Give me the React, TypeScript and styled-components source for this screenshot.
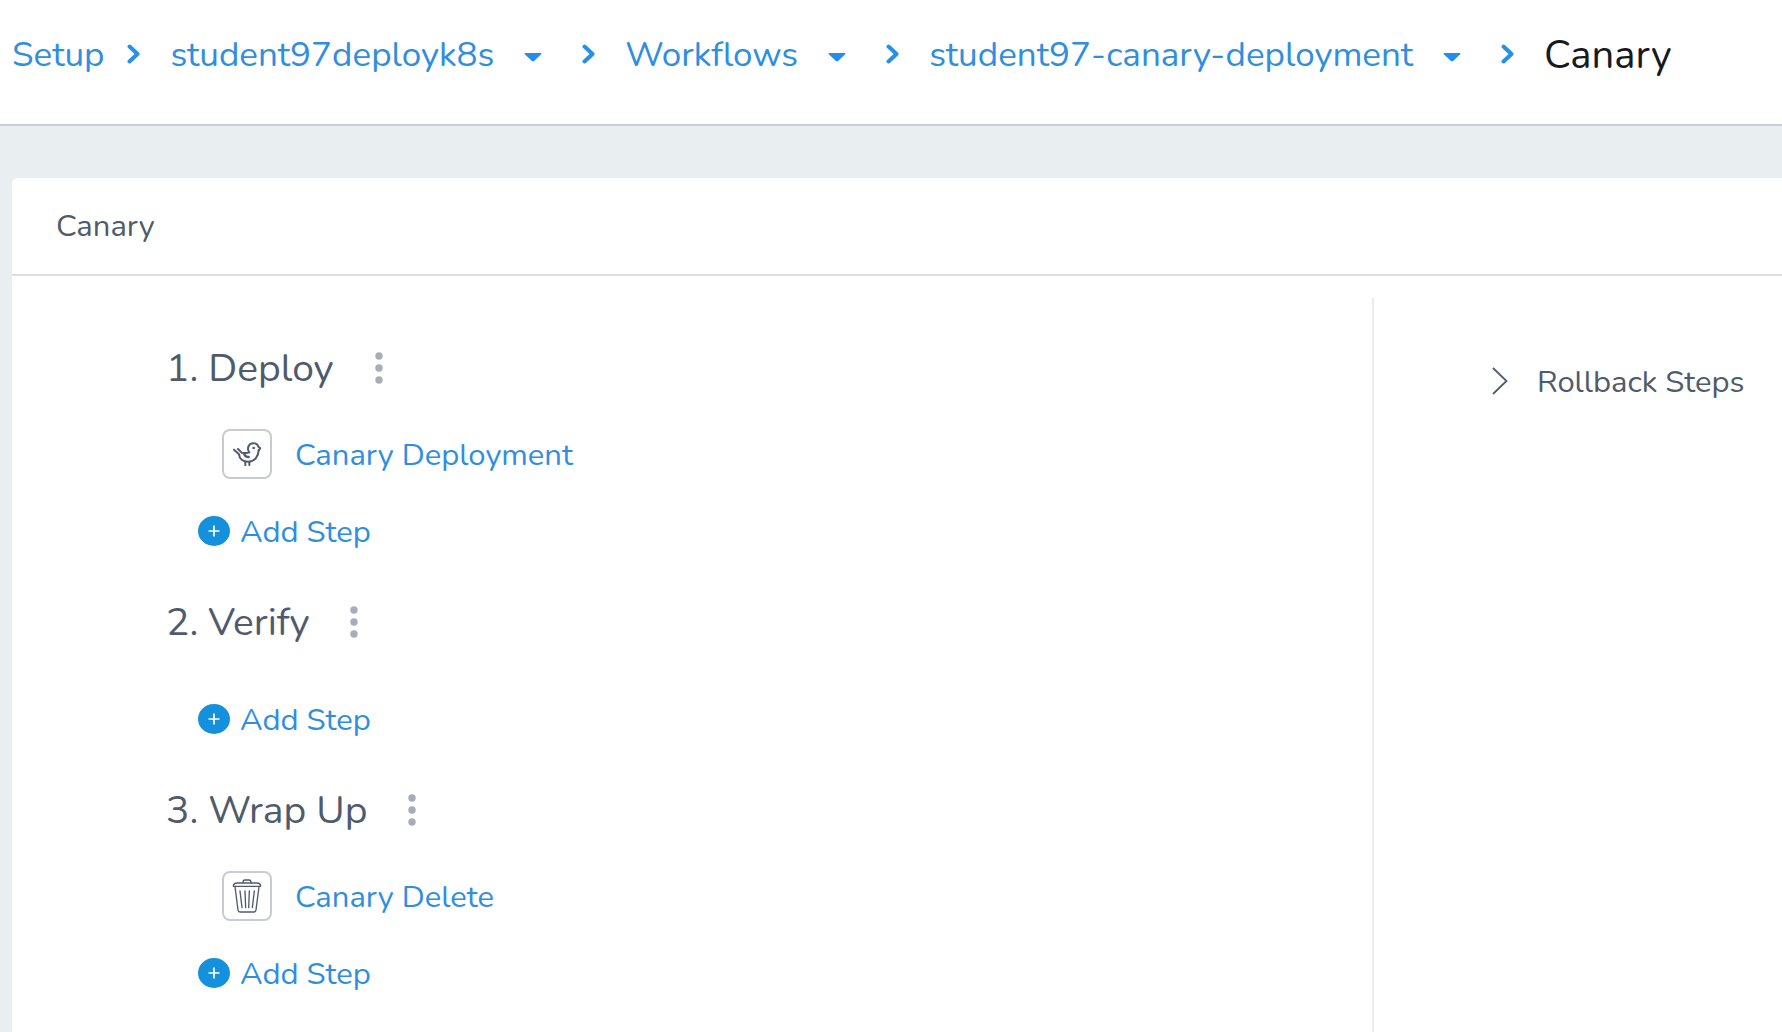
import React from "react";
import styled, { createGlobalStyle } from "styled-components";

const GlobalStyle = createGlobalStyle`
  *, *::before, *::after { box-sizing: border-box; }
  body {
    margin: 0;
    background: #e9eef1;
    color: #4f5b6b;
    font-family: Nunito, Lato, "Noto Sans", sans-serif;
    font-weight: 400;
  }
  h1, h2, ol, ul, p { margin: 0; padding: 0; font-weight: inherit; }
  ol, ul { list-style: none; }
`;

const Page = styled.div`
  min-height: 100vh;
  display: flex;
  flex-direction: column;
`;

const TopBar = styled.header`
  background: #ffffff;
  border-bottom: 2px solid #c8d0d1;
  padding: 29px 12px 45px;
`;

const Crumbs = styled.ol`
  display: flex;
  align-items: center;
  height: 50px;
  white-space: nowrap;
`;

const Crumb = styled.li`
  display: flex;
  align-items: center;
`;

const CrumbLink = styled.a`
  padding-top: 2px;
  color: #2f8ee0;
  font-size: 35px;
  line-height: 48px;
  text-decoration: none;
`;

const CurrentPage = styled.span`
  padding-top: 2px;
  color: #17191c;
  font-size: 40px;
  line-height: 48px;
`;

const CaretButton = styled.button`
  display: flex;
  margin: 6px 0 0 30px;
  padding: 0;
  border: 0;
  background: none;
  cursor: pointer;
`;

const Separator = styled.svg<{ $first?: boolean }>`
  width: 13px;
  height: 20px;
  margin: 0 30px 0 ${(p) => (p.$first ? 23 : 40)}px;
  flex: none;
`;

const Card = styled.main`
  flex: 1;
  display: flex;
  flex-direction: column;
  margin: 52px 0 0 12px;
  background: #ffffff;
  border-radius: 6px 0 0 0;
`;

const CardHeader = styled.div`
  padding: 24px 44px;
  border-bottom: 2px solid #dcdee1;
`;

const CardTitle = styled.h1`
  font-size: 31px;
  line-height: 48px;
`;

const CardBody = styled.div`
  flex: 1;
  display: grid;
  grid-template-columns: minmax(0, 1fr) 410px;
  padding-top: 22px;
`;

const Phases = styled.ol`
  display: flex;
  flex-direction: column;
  gap: 49px;
  padding: 45px 0 44px 154px;
`;

const PhaseHeading = styled.div`
  display: flex;
  align-items: center;
  gap: 41px;
`;

const PhaseTitle = styled.h2`
  padding-top: 2px;
  font-size: 39px;
  line-height: 48px;
`;

const MenuButton = styled.button`
  display: flex;
  padding: 0;
  border: 0;
  background: none;
  cursor: pointer;
`;

const Steps = styled.ul`
  min-height: 57px;
  padding: 36px 0 20px 56px;
`;

const Step = styled.li`
  display: flex;
  align-items: center;
  gap: 23px;
  margin-bottom: 17px;
`;

const StepIcon = styled.span`
  display: flex;
  align-items: center;
  justify-content: center;
  width: 50px;
  height: 50px;
  border: 2px solid #c8cbd0;
  border-radius: 8px;
`;

const StepLink = styled.a`
  padding-top: 2px;
  color: #2f8ee0;
  font-size: 31px;
  line-height: 48px;
  text-decoration: none;
`;

const AddStepButton = styled.button`
  display: flex;
  align-items: center;
  gap: 10px;
  margin-left: 32px;
  padding: 0;
  border: 0;
  background: none;
  color: #2f8ee0;
  font: inherit;
  font-size: 31px;
  line-height: 32px;
  cursor: pointer;
`;

const Rollback = styled.aside`
  border-left: 2px solid #ececee;
  padding: 58px 0 0 118px;
`;

const RollbackToggle = styled.button`
  display: flex;
  align-items: center;
  gap: 29px;
  padding: 0;
  border: 0;
  background: none;
  color: inherit;
  font: inherit;
  font-size: 31px;
  line-height: 48px;
  white-space: nowrap;
  cursor: pointer;
`;

const ToggleLabel = styled.span`
  padding-top: 2px;
`;

function Chevron({ first }: { first?: boolean }) {
  return (
    <Separator $first={first} viewBox="0 0 13 20" aria-hidden="true">
      <path d="M2.5 2.5 10.5 10l-8 7.5" fill="none" stroke="#2590ea" strokeWidth="4" strokeLinecap="round" strokeLinejoin="round" />
    </Separator>
  );
}

function Caret({ label }: { label: string }) {
  return (
    <CaretButton type="button" aria-label={label}>
      <svg width="18" height="9" viewBox="0 0 18 9" aria-hidden="true">
        <path d="M1 0h16q1 .3.4 1L10.4 7.800q-1.400 1-2.800 0L.6 1Q0 .3 1 0Z" fill="#1f8fee" />
      </svg>
    </CaretButton>
  );
}

function DotsIcon() {
  return (
    <svg width="8" height="34" viewBox="0 0 8 34" fill="#a5adb8" aria-hidden="true">
      <circle cx="4" cy="5" r="3.700" />
      <circle cx="4" cy="17" r="3.700" />
      <circle cx="4" cy="29" r="3.700" />
    </svg>
  );
}

function PlusIcon() {
  return (
    <svg width="32" height="32" viewBox="0 0 32 32" aria-hidden="true">
      <ellipse cx="16" cy="15" rx="16" ry="15" fill="#1590dc" />
      <path d="M16 9.500v11M10.500 15h11" stroke="#ffffff" strokeWidth="1.700" />
    </svg>
  );
}

function BirdIcon() {
  return (
    <svg width="28" height="24" viewBox="0 0 84 72" fill="none" stroke="#505c6c" strokeWidth="6" strokeLinecap="round" strokeLinejoin="round" aria-hidden="true">
      <path d="M3 23 18 37C19 50 30 59 46 59 65 59 76 44 77 25" />
      <path d="M15 21 26 32C33 33 43 34 49 31 43 25 44 13 51 7 60 0 74 4 76 14L82 19 77 25" />
      <path d="M34 37C36 43 41 45 47 45" strokeWidth="7" />
      <path d="M37 59v11M49 59v10" />
      <circle cx="62" cy="18" r="4" fill="#505c6c" stroke="none" />
    </svg>
  );
}

function TrashIcon() {
  return (
    <svg width="30" height="34" viewBox="0 0 90 102" fill="none" stroke="#505c6c" strokeWidth="4" strokeLinecap="round" strokeLinejoin="round" aria-hidden="true">
      <path d="M4 22C4 14 9 12 16 12H74C81 12 86 14 86 22Z" />
      <path d="M33 11C33 5 35 3 39 3H51C55 3 57 5 57 11" />
      <path d="M9 23 18 93Q19 99 24 99H66Q71 99 72 93L81 23" />
      <path d="M24 36 30 86M39 36 41 86M52 36 50 86M67 36 61 86" />
    </svg>
  );
}

type StepData = { name: string; icon: React.ReactNode };
type PhaseData = { title: string; steps: StepData[] };

const crumbs = ["student97deployk8s", "Workflows", "student97-canary-deployment"];

const phases: PhaseData[] = [
  { title: "1. Deploy", steps: [{ name: "Canary Deployment", icon: <BirdIcon /> }] },
  { title: "2. Verify", steps: [] },
  { title: "3. Wrap Up", steps: [{ name: "Canary Delete", icon: <TrashIcon /> }] },
];

function Phase({ title, steps }: PhaseData) {
  return (
    <li>
      <PhaseHeading>
        <PhaseTitle>{title}</PhaseTitle>
        <MenuButton type="button" aria-label={`${title} options`}>
          <DotsIcon />
        </MenuButton>
      </PhaseHeading>
      <Steps>
        {steps.map((step) => (
          <Step key={step.name}>
            <StepIcon>{step.icon}</StepIcon>
            <StepLink href="#">{step.name}</StepLink>
          </Step>
        ))}
      </Steps>
      <AddStepButton type="button">
        <PlusIcon />
        Add Step
      </AddStepButton>
    </li>
  );
}

export default function App() {
  return (
    <Page>
      <GlobalStyle />
      <TopBar>
        <nav aria-label="Breadcrumb">
          <Crumbs>
            <Crumb>
              <CrumbLink href="#">Setup</CrumbLink>
            </Crumb>
            {crumbs.map((name, i) => (
              <Crumb key={name}>
                <Chevron first={i === 0} />
                <CrumbLink href="#">{name}</CrumbLink>
                <Caret label={`Switch ${name}`} />
              </Crumb>
            ))}
            <Crumb>
              <Chevron />
              <CurrentPage aria-current="page">Canary</CurrentPage>
            </Crumb>
          </Crumbs>
        </nav>
      </TopBar>
      <Card>
        <CardHeader>
          <CardTitle>Canary</CardTitle>
        </CardHeader>
        <CardBody>
          <Phases>
            {phases.map((phase) => (
              <Phase key={phase.title} {...phase} />
            ))}
          </Phases>
          <Rollback>
            <RollbackToggle type="button" aria-expanded="false">
              <svg width="16" height="28" viewBox="0 0 16 28" aria-hidden="true">
                <path d="M1 1 14.500 14 1 27" fill="none" stroke="#505c6c" strokeWidth="1.800" />
              </svg>
              <ToggleLabel>Rollback Steps</ToggleLabel>
            </RollbackToggle>
          </Rollback>
        </CardBody>
      </Card>
    </Page>
  );
}
